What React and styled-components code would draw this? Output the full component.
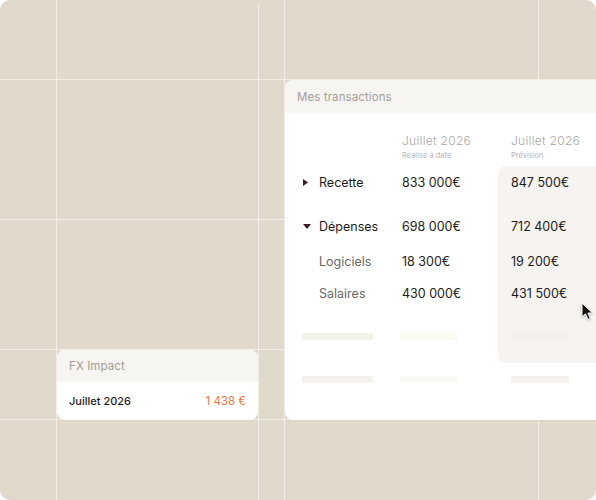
import React from "react";
import styled, { createGlobalStyle } from "styled-components";

const Global = createGlobalStyle`
  html, body { margin: 0; padding: 0; background: #ffffff; }
  body { font-family: Inter, "Noto Sans", sans-serif; -webkit-font-smoothing: antialiased; }
  * { box-sizing: border-box; }
`;

const LINE = "#f3eee6";

const Canvas = styled.div`
  width: 596px;
  height: 500px;
  border-radius: 10px;
  overflow: hidden;
  display: grid;
  grid-template-columns: 57px 201px 27px 311px;
  grid-template-rows: 80px 270px 70px 80px;
  background:
    linear-gradient(90deg,
      transparent 258px, ${LINE} 258px 259px,
      transparent 259px) 0 4px / 100% 100% no-repeat,
    linear-gradient(90deg,
      transparent 56px, ${LINE} 56px 57px,
      transparent 57px 284px, ${LINE} 284px 285px,
      transparent 285px 538px, ${LINE} 538px 539px,
      transparent 539px),
    linear-gradient(180deg,
      transparent 79px, ${LINE} 79px 80px,
      transparent 80px 219px, ${LINE} 219px 220px,
      transparent 220px 349px, ${LINE} 349px 350px,
      transparent 350px 419px, ${LINE} 419px 420px,
      transparent 420px),
    #e2d9cd;
`;

const Card = styled.div`
  grid-column: ${(p) => p.$col};
  grid-row: ${(p) => p.$row};
  width: ${(p) => p.$w}px;
  justify-self: start;
  background: #ffffff;
  border-radius: 8px;
  overflow: hidden;
  display: flex;
  flex-direction: column;
  position: relative;
  box-shadow: 0 1px 2px rgba(80, 60, 30, 0.05);
`;

const CardHeader = styled.div`
  height: ${(p) => p.$h}px;
  flex: none;
  background: #f7f5f1;
  display: flex;
  align-items: center;
  padding-left: 12px;
  font-size: 11.5px;
  color: #a19e9a;
  letter-spacing: 0.1px;
`;

const Table = styled.div`
  display: flex;
  padding-left: 18px;
`;

const Column = styled.div`
  display: flex;
  flex-direction: column;
  width: ${(p) => p.$w}px;
  flex: none;
`;

const ColHead = styled.div`
  height: 53px;
  padding-top: 20px;
  display: flex;
  flex-direction: column;
  padding-left: ${(p) => p.$pl || 0}px;
`;

const ColTitle = styled.div`
  font-size: 12px;
  line-height: 16px;
  color: #a8a6a3;
  font-weight: 300;
  letter-spacing: 0.3px;
`;

const ColSub = styled.div`
  margin-top: 2px;
  font-size: 7.5px;
  line-height: 10px;
  color: #b7b4b0;
`;

const Highlight = styled.div`
  background: #f6f3f0;
  border-radius: 8px 0 0 8px;
  padding: 0 0 11px 13px;
  display: flex;
  flex-direction: column;
`;

const Row = styled.div`
  height: 32px;
  margin-top: ${(p) => p.$mt || 0}px;
  display: flex;
  align-items: center;
  font-size: 12.5px;
  color: ${(p) => (p.$sub ? "#6b6966" : "#1d1c1b")};
  padding-left: ${(p) => (p.$in ? 16 : 0) + (p.$pl || 0)}px;
  white-space: nowrap;
`;

const Caret = styled.span`
  width: 16px;
  flex: none;
  display: flex;
  align-items: center;
`;

const Skeleton = styled.div`
  height: 7px;
  width: ${(p) => p.$w}px;
  margin-left: ${(p) => p.$ml || 0}px;
  border-radius: 1px;
  background: ${(p) => p.$c};
`;

const Cursor = styled.svg`
  position: absolute;
  left: 296px;
  top: 222px;
  filter: drop-shadow(0 1px 1px rgba(0, 0, 0, 0.25));
`;

const FxBody = styled.div`
  height: 38px;
  display: flex;
  align-items: center;
  justify-content: space-between;
  padding: 0 12px 0 12px;
  font-size: 11.5px;
`;

const FxLabel = styled.span`
  color: #1d1c1b;
  font-weight: 500;
  font-size: 11px;
`;

const FxValue = styled.span`
  color: #e8773f;
`;

const CaretRight = () => (
  <svg width="5" height="7" viewBox="0 0 5 7">
    <path d="M0 0 L5 3.5 L0 7 Z" fill="#3b1d2c" />
  </svg>
);
const CaretDown = () => (
  <svg width="8" height="5" viewBox="0 0 8 5">
    <path d="M0 0 L8 0 L4 5 Z" fill="#3b1d2c" />
  </svg>
);

const rows = [
  { label: "Recette", caret: "right", a: "833 000€", b: "847 500€", mt: 0 },
  { label: "Dépenses", caret: "down", a: "698 000€", b: "712 400€", mt: 12 },
  { label: "Logiciels", sub: true, a: "18 300€", b: "19 200€", mt: 3 },
  { label: "Salaires", sub: true, a: "430 000€", b: "431 500€", mt: 0 },
];

export default function App() {
  return (
    <>
      <Global />
      <Canvas>
        <Card $col="4" $row="2 / 4" $w={340}>
          <CardHeader $h={33}>Mes transactions</CardHeader>
          <Table>
            <Column $w={99}>
              <ColHead />
              {rows.map((r) => (
                <Row key={r.label} $mt={r.mt} $sub={r.sub} $in={r.sub}>
                  {r.caret && (
                    <Caret>{r.caret === "right" ? <CaretRight /> : <CaretDown />}</Caret>
                  )}
                  {r.label}
                </Row>
              ))}
              <Row $mt={11}>
                <Skeleton $w={71} $ml={-1} $c="#f4f1ed" />
              </Row>
              <Row $mt={11}>
                <Skeleton $w={71} $ml={-1} $c="#f4f1ed" />
              </Row>
            </Column>
            <Column $w={96}>
              <ColHead>
                <ColTitle>Juillet 2026</ColTitle>
                <ColSub>Réalisé à date</ColSub>
              </ColHead>
              {rows.map((r) => (
                <Row key={r.label} $mt={r.mt}>{r.a}</Row>
              ))}
              <Row $mt={11}>
                <Skeleton $w={58} $ml={-2} $c="#fbfaf5" />
              </Row>
              <Row $mt={11}>
                <Skeleton $w={58} $ml={-2} $c="#fbfaf5" />
              </Row>
            </Column>
            <Column $w={127}>
              <ColHead $pl={13}>
                <ColTitle>Juillet 2026</ColTitle>
                <ColSub>Prévision</ColSub>
              </ColHead>
              <Highlight>
                {rows.map((r) => (
                  <Row key={r.label} $mt={r.mt}>{r.b}</Row>
                ))}
                <Row $mt={11}>
                  <Skeleton $w={58} $c="#f3f0ec" />
                </Row>
              </Highlight>
              <Row $pl={13}>
                <Skeleton $w={58} $c="#f4f1ed" />
              </Row>
            </Column>
          </Table>
          <Cursor width="14" height="20" viewBox="0 0 14 20">
            <path
              d="M1 1 L1 15 L4.5 11.8 L7 17.5 L9.3 16.5 L6.9 11 L11.5 11 Z"
              fill="#111"
              stroke="#fff"
              strokeWidth="1"
              strokeLinejoin="round"
            />
          </Cursor>
        </Card>
        <Card $col="2" $row="3" $w={201}>
          <CardHeader $h={32}>FX Impact</CardHeader>
          <FxBody>
            <FxLabel>Juillet 2026</FxLabel>
            <FxValue>1 438 €</FxValue>
          </FxBody>
        </Card>
      </Canvas>
    </>
  );
}
